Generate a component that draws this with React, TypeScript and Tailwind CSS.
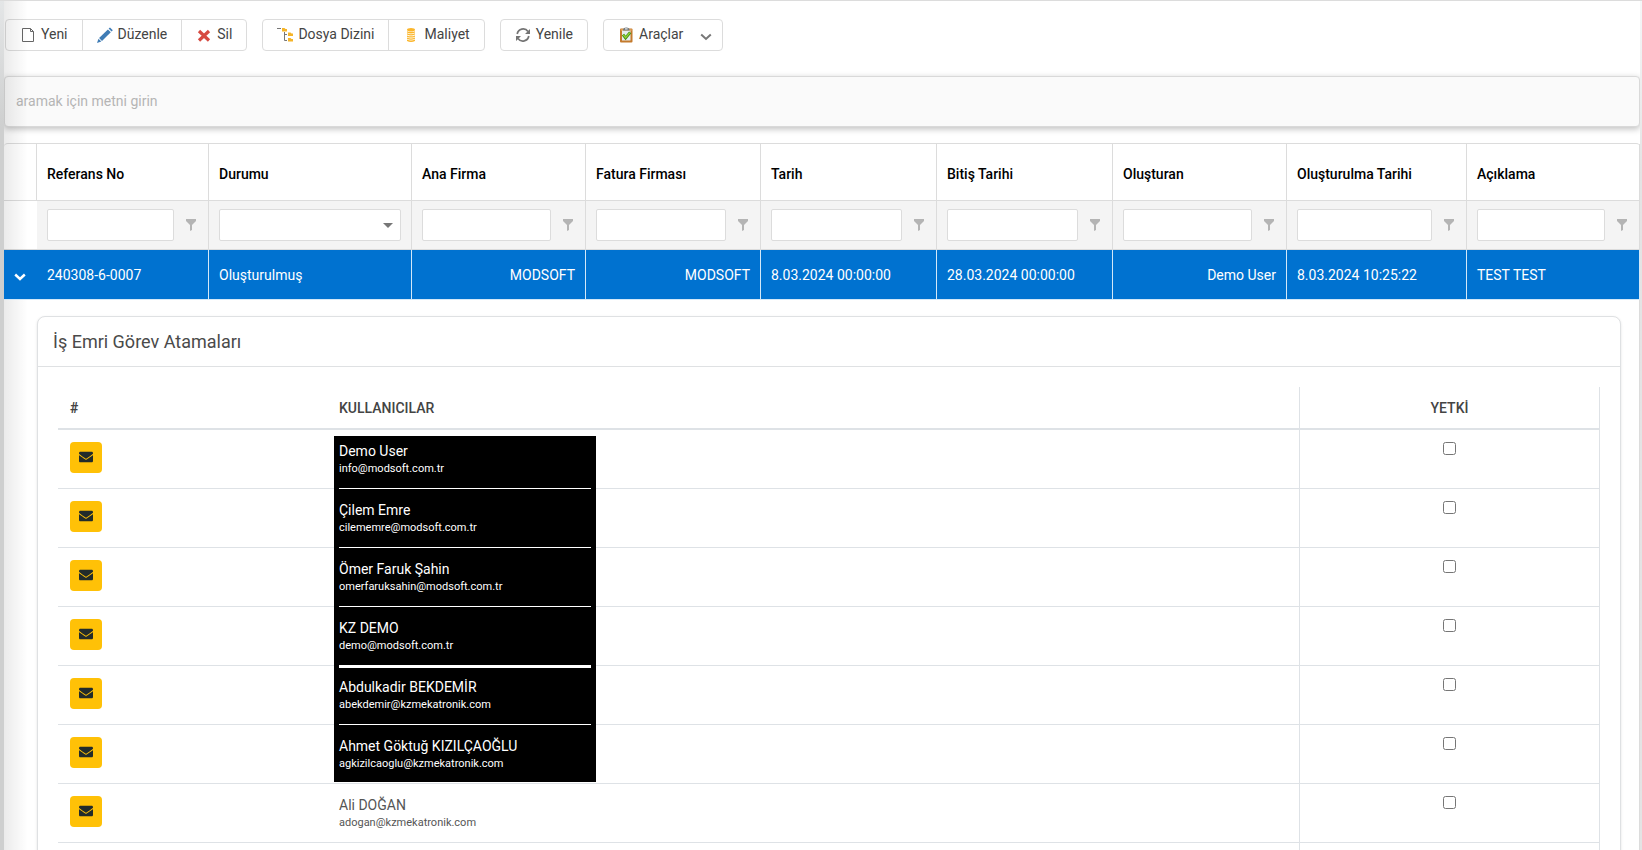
import type { ReactNode } from "react";
import { FaEnvelope } from "react-icons/fa";

function NewIcon() {
  return (
    <svg width="16" height="16" viewBox="0 0 16 16" fill="none" stroke="#666" aria-hidden="true">
      <path d="M2.500 1.500h8l3 3v10h-11z" />
      <path d="M10.500 1.500v3h3" />
    </svg>
  );
}

function EditIcon() {
  return (
    <svg width="16" height="16" viewBox="0 0 16 16" fill="#3f7cb5" aria-hidden="true">
      <path d="M11.600 1.600 13 .4l2.800 2.800-1.300 1.400z" />
      <path d="M10.900 2.400 13.800 5.300 5 14l-2.900-2.900z" />
      <path d="M1.500 11.800 4.300 14.600 0 16z" />
    </svg>
  );
}

function DeleteIcon() {
  return (
    <svg width="16" height="16" viewBox="0 0 16 16" fill="none" stroke="#d64a41" strokeWidth="3.200" aria-hidden="true">
      <path d="M3 4l10 9.500M13 4 3 13.500" />
    </svg>
  );
}

function TreeIcon() {
  return (
    <svg width="16" height="16" viewBox="0 0 16 16" aria-hidden="true">
      <path d="M0 1.500h4" stroke="#777" />
      <path d="M7.500 5v8.500H10M7.500 7.500H10" fill="none" stroke="#777" />
      <path d="M5 1h2.500l1 1H10v2.500H5zM11 5.500h2.500l1 1H16V9h-5zM11 11h2.500l1 1H16v2.500h-5z" fill="#f5b428" />
    </svg>
  );
}

function CoinsIcon() {
  return (
    <svg width="16" height="16" viewBox="0 0 16 16" fill="#fbb62b" aria-hidden="true">
      <ellipse cx="8" cy="2.800" rx="4" ry="1.800" />
      <path d="M4 4.200q4 1.800 8 0v1.300q-4 1.800-8 0zM4 6.300q4 1.800 8 0v1.300q-4 1.800-8 0zM4 8.400q4 1.800 8 0v1.300q-4 1.800-8 0zM4 10.500q4 1.800 8 0v1.300q-4 1.800-8 0zM4 12.600q4 1.800 8 0v1.500q-4 1.800-8 0z" />
    </svg>
  );
}

function RefreshIcon() {
  return (
    <svg width="16" height="16" viewBox="0 0 16 16" fill="none" stroke="#747474" strokeWidth="1.700" aria-hidden="true">
      <path d="M2.200 7A6 6 0 0 1 13 4.500M13.800 9A6 6 0 0 1 3 11.500" />
      <path d="M15 2v5h-5zM1 14V9h5z" fill="#747474" stroke="none" />
    </svg>
  );
}

function ClipboardIcon() {
  return (
    <svg width="16" height="16" viewBox="0 0 16 16" aria-hidden="true">
      <rect x="2" y="1.500" width="12.500" height="14" rx="1" fill="#c47a2c" />
      <rect x="2.800" y="2.200" width="10.900" height="1.500" fill="#e2a45c" />
      <path d="M4 3.500h8.500v10H4z" fill="#e6ecef" />
      <path d="M5 3.500Q5 .4 8.300.4t3.300 3.100z" fill="#6f777c" />
      <rect x="7" y="1.300" width="2.600" height="1.200" fill="#e4e8ea" />
      <path d="M5 7.600l2.600 3.400 4.600-5.600" fill="none" stroke="#3c8a12" strokeWidth="2.800" />
      <path d="M5.300 7.900l2.300 2.800 4.300-5.100" fill="none" stroke="#93d437" strokeWidth="1.400" />
    </svg>
  );
}

function Chevron({ className, width }: { className: string; width: number }) {
  return (
    <svg width="12" height="12" viewBox="0 0 12 12" fill="none" stroke="currentColor" strokeWidth={width} className={className} aria-hidden="true">
      <path d="M1.200 3.500 6 8l4.800-4.500" />
    </svg>
  );
}

function ToolButton({ icon, children }: { icon: ReactNode; children: ReactNode }) {
  return (
    <button type="button" className="flex h-full items-center gap-[5px] px-3.5 text-[#444] hover:bg-gray-50">
      {icon}
      <span className="pb-0.5">{children}</span>
    </button>
  );
}

function ToolGroup({ children }: { children: ReactNode }) {
  return <div className="flex h-8 divide-x divide-[#dcdcdc] rounded-[4px] border border-[#dcdcdc] bg-white">{children}</div>;
}

type Column = { title: string; value: string; col: string; right?: boolean; select?: boolean };

const columns: Column[] = [
  { title: "Referans No", value: "240308-6-0007", col: "w-[172px]" },
  { title: "Durumu", value: "Oluşturulmuş", col: "w-[203px]", select: true },
  { title: "Ana Firma", value: "MODSOFT", col: "w-[174px]", right: true },
  { title: "Fatura Firması", value: "MODSOFT", col: "w-[175px]", right: true },
  { title: "Tarih", value: "8.03.2024 00:00:00", col: "w-[176px]" },
  { title: "Bitiş Tarihi", value: "28.03.2024 00:00:00", col: "w-[176px]" },
  { title: "Oluşturan", value: "Demo User", col: "w-[174px]", right: true },
  { title: "Oluşturulma Tarihi", value: "8.03.2024 10:25:22", col: "w-[180px]" },
  { title: "Açıklama", value: "TEST TEST", col: "w-[173px]" },
];

type User = { name: string; mail: string; dark: boolean; bg: string; line: string };

const users: User[] = [
  { name: "Demo User", mail: "info@modsoft.com.tr", dark: true, bg: "top-1.5 -bottom-px", line: "h-px" },
  { name: "Çilem Emre", mail: "cilememre@modsoft.com.tr", dark: true, bg: "top-0 -bottom-px", line: "h-px" },
  { name: "Ömer Faruk Şahin", mail: "omerfaruksahin@modsoft.com.tr", dark: true, bg: "top-0 -bottom-px", line: "h-px" },
  { name: "KZ DEMO", mail: "demo@modsoft.com.tr", dark: true, bg: "top-0 -bottom-[3px]", line: "h-[3px]" },
  { name: "Abdulkadir BEKDEMİR", mail: "abekdemir@kzmekatronik.com", dark: true, bg: "top-0.5 -bottom-px", line: "h-px" },
  { name: "Ahmet Göktuğ KIZILÇAOĞLU", mail: "agkizilcaoglu@kzmekatronik.com", dark: true, bg: "top-0 bottom-px", line: "hidden" },
  { name: "Ali DOĞAN", mail: "adogan@kzmekatronik.com", dark: false, bg: "", line: "" },
];

function FilterCell({ column }: { column: Column }) {
  if (column.select) {
    return (
      <div className="relative px-2.5">
        <select aria-label={column.title} className="block h-8 w-full appearance-none rounded-[2px] border border-[#dcdcdc] bg-white pl-2">
          <option></option>
        </select>
        <svg width="10" height="5" viewBox="0 0 10 5" fill="#777" className="pointer-events-none absolute right-[18px] top-3.5" aria-hidden="true">
          <path d="M0 0h10L5 5z" />
        </svg>
      </div>
    );
  }
  return (
    <div className="flex items-center gap-3 pl-2.5 pr-3">
      <input type="text" aria-label={column.title} className="h-8 min-w-0 flex-1 rounded-[2px] border border-[#dcdcdc] bg-white px-2" />
      <button type="button" aria-label={column.title + " filtresi"}>
        <svg width="10" height="12" viewBox="0 0 10 12" fill="#b4b4b4" aria-hidden="true">
          <path d="M0 0h10v2L6 6v5l-2 1V6L0 2z" />
        </svg>
      </button>
    </div>
  );
}

function Assignments() {
  const border = "border-[#dee2e6]";
  return (
    <section className="rounded-[8px] border border-[#dfe1e3] bg-white shadow-sm">
      <h2 className="border-b border-[#dfe1e3] px-[15px] text-lg leading-[49px] text-[#4a4a4a]">İş Emri Görev Atamaları</h2>
      <div className="px-5 pt-5">
        <table className="w-full table-fixed border-separate border-spacing-0 text-[#444]">
          <colgroup>
            <col className="w-[269px]" />
            <col className="w-[972px]" />
            <col className="w-[301px]" />
          </colgroup>
          <thead>
            <tr className="h-[43px] text-left font-medium">
              <th className={`border-b-2 px-3 font-bold ${border}`}>#</th>
              <th className={`border-b-2 px-3 font-medium ${border}`}>KULLANICILAR</th>
              <th className={`border-x border-b-2 px-3 text-center font-medium ${border}`}>YETKİ</th>
            </tr>
          </thead>
          <tbody>
            {users.map((u) => (
              <tr key={u.mail} className="h-[59px] align-top">
                <td className={`border-b px-3 pt-3 ${border}`}>
                  <button type="button" aria-label={u.name + " e-posta"} className="flex h-[31px] w-8 justify-center rounded-[4px] bg-[#ffc107] pt-2 text-[#212b2b]">
                    <FaEnvelope size={14} />
                  </button>
                </td>
                <td className={`relative border-b px-3 pt-3 ${border}`}>
                  {u.dark && (
                    <div className={`absolute left-[7px] flex w-[262px] items-end bg-black px-[5px] ${u.bg}`}>
                      <div className={`w-full bg-white ${u.line}`} />
                    </div>
                  )}
                  <div className={`relative ${u.dark ? "text-white" : "text-[#555]"}`}>
                    <div className="leading-[18px]">{u.name}</div>
                    <div className="text-[11px] leading-[18px]">{u.mail}</div>
                  </div>
                </td>
                <td className={`border-x border-b pt-3 ${border}`}>
                  <input type="checkbox" aria-label={u.name + " yetki"} className="mx-auto block size-[13px]" />
                </td>
              </tr>
            ))}
            <tr className="h-[59px]">
              <td className={`border-b ${border}`} />
              <td className={`border-b ${border}`} />
              <td className={`border-x border-b ${border}`} />
            </tr>
          </tbody>
        </table>
      </div>
    </section>
  );
}

export default function App() {
  return (
    <div className="relative h-screen overflow-hidden border-t border-[#dcdcdc] bg-white pl-1 pr-0.5 font-[Roboto,sans-serif] text-sm text-black">
      <header className="flex gap-[15px] pl-px pt-[18px]">
        <ToolGroup>
          <ToolButton icon={<NewIcon />}>Yeni</ToolButton>
          <ToolButton icon={<EditIcon />}>Düzenle</ToolButton>
          <ToolButton icon={<DeleteIcon />}>Sil</ToolButton>
        </ToolGroup>
        <ToolGroup>
          <ToolButton icon={<TreeIcon />}>Dosya Dizini</ToolButton>
          <ToolButton icon={<CoinsIcon />}>Maliyet</ToolButton>
        </ToolGroup>
        <ToolGroup>
          <ToolButton icon={<RefreshIcon />}>Yenile</ToolButton>
        </ToolGroup>
        <ToolGroup>
          <button type="button" className="flex h-full items-center gap-[5px] pl-3.5 pr-2.5 text-[#444]">
            <ClipboardIcon />
            <span className="pb-0.5">Araçlar</span>
            <Chevron className="ml-3 mt-1 text-[#777]" width={2} />
          </button>
        </ToolGroup>
      </header>

      <div className="mt-[25px] rounded-[4px] border border-[#d9d9d9] bg-[#fafafa] shadow-[0_2px_6px_rgba(0,0,0,0.25)]">
        <input
          type="search"
          aria-label="Ara"
          placeholder="aramak için metni girin"
          className="block h-[49px] w-full bg-transparent px-[11px] pb-0.5 outline-none placeholder:text-[#b5b5b5]"
        />
      </div>

      <main className="mt-4 rounded-t-[4px] border-t border-[#dcdcdc]">
        <table className="w-full table-fixed border-separate border-spacing-0">
          <colgroup>
            <col className="w-[33px]" />
            {columns.map((c) => (
              <col key={c.title} className={c.col} />
            ))}
          </colgroup>
          <thead>
            <tr className="h-[57px]">
              <th className="border-b border-r border-[#dcdcdc]" />
              {columns.map((c) => (
                <th key={c.title} className="border-b border-r border-[#dcdcdc] px-2.5 pt-1 text-left font-medium">
                  {c.title}
                </th>
              ))}
            </tr>
            <tr className="h-[49px]">
              <td className="border-b border-[#dcdcdc]" />
              {columns.map((c) => (
                <td key={c.title} className="border-b border-r border-[#dcdcdc] bg-[#f4f4f4] p-0">
                  <FilterCell column={c} />
                </td>
              ))}
            </tr>
          </thead>
          <tbody>
            <tr className="relative z-10 h-[50px] bg-[#0072d0] text-white">
              <td className="border-b border-[#d3e8f8]">
                <button type="button" aria-label="Detay" className="ml-2.5 mt-1 block">
                  <Chevron className="" width={2.400} />
                </button>
              </td>
              {columns.map((c) => (
                <td key={c.title} className={`border-b border-r border-[#d3e8f8] px-2.5 ${c.right ? "text-right" : "text-left"}`}>
                  {c.value}
                </td>
              ))}
            </tr>
            <tr>
              <td colSpan={10} className="border-r border-[#dcdcdc] pb-4 pl-[33px] pr-[18px] pt-4">
                <Assignments />
              </td>
            </tr>
          </tbody>
        </table>
      </main>

      <div className="pointer-events-none absolute inset-y-0 left-0 w-1 bg-linear-to-b from-[#e4e6e7] to-[#cecfcf] to-15%" />
      <div className="pointer-events-none absolute inset-y-0 left-1 w-6 bg-linear-to-r from-black/8 to-transparent" />
      <div className="pointer-events-none absolute inset-y-0 right-0 w-0.5 bg-linear-to-b from-[#f5f7f8] to-[#e4e4e4] to-20%" />
    </div>
  );
}
